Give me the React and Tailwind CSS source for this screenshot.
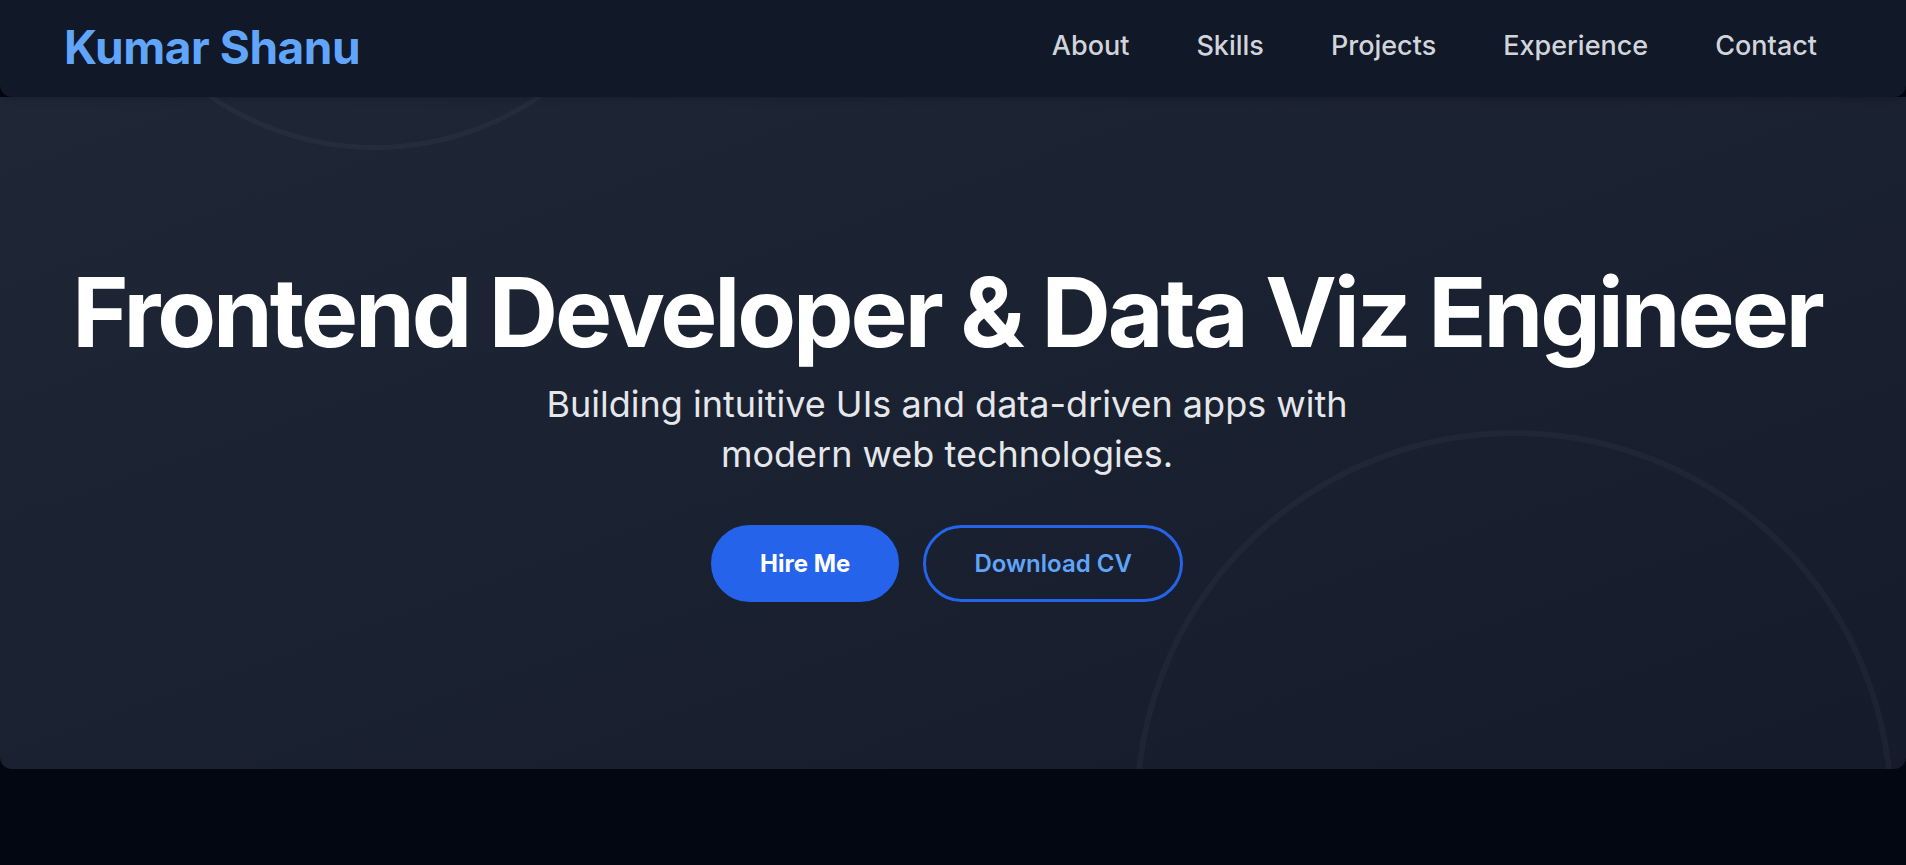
import React from 'react';

const links = ['About', 'Skills', 'Projects', 'Experience', 'Contact'];

const Navbar = () => {
  return (
    <nav className="h-[97px] flex items-center justify-between pl-16 pr-[73px] pb-1 bg-[#111827] rounded-b-xl shadow-md relative z-10">
      <a href="#" className="text-[46px] font-bold text-[#60a5fa] tracking-[-0.01em] leading-none">
        Kumar Shanu
      </a>
      <ul className="flex items-center gap-[35px]">
        {links.map((link) => (
          <li key={link}>
            <a href={`#${link.toLowerCase()}`} className="px-4 text-[27px] font-medium text-[#d1d5db] hover:text-white">
              {link}
            </a>
          </li>
        ))}
      </ul>
    </nav>
  );
};

const Hero = () => {
  return (
    <section className="relative h-[672px] overflow-hidden rounded-b-xl bg-linear-to-br from-[#1f2737] to-[#151b2a] flex flex-col items-center justify-center text-center pr-3">
      {/* decorative rings */}
      <div className="absolute left-[82px] -top-[533px] w-[586px] h-[586px] rounded-full border-[5px] border-[#ffffff09]"></div>
      <div className="absolute left-[1134px] top-[333px] w-[760px] h-[760px] rounded-full border-[6px] border-[#ffffff08]"></div>

      <h1 className="relative text-8xl leading-none font-bold text-white tracking-[-0.032em]">
        Frontend Developer &amp; Data Viz Engineer
      </h1>
      <p className="relative mt-5 max-w-4xl text-4xl leading-snug text-[#e5e7eb]">
        Building intuitive UIs and data-driven apps with modern web technologies.
      </p>
      <div className="relative mt-[46px] flex items-center gap-6">
        <button className="h-[77px] px-[46px] border-[3px] border-[#2563eb] bg-[#2563eb] text-white text-2xl font-bold rounded-full">
          Hire Me
        </button>
        <button className="h-[77px] px-12 border-[3px] border-[#2563eb] text-[#60a5fa] text-2xl font-semibold rounded-full">
          Download CV
        </button>
      </div>
    </section>
  );
};

export default function App() {
  return (
    <div className="h-screen overflow-y-auto bg-[#030712] font-['Inter','Noto_Sans',sans-serif] [&::-webkit-scrollbar]:w-[6px] [&::-webkit-scrollbar-track]:bg-[#3b3b3b] [&::-webkit-scrollbar-thumb]:bg-[#6b6b6b]">
      <Navbar />
      <Hero />
      <div id="about" className="h-[6400px]"></div>
    </div>
  );
}
